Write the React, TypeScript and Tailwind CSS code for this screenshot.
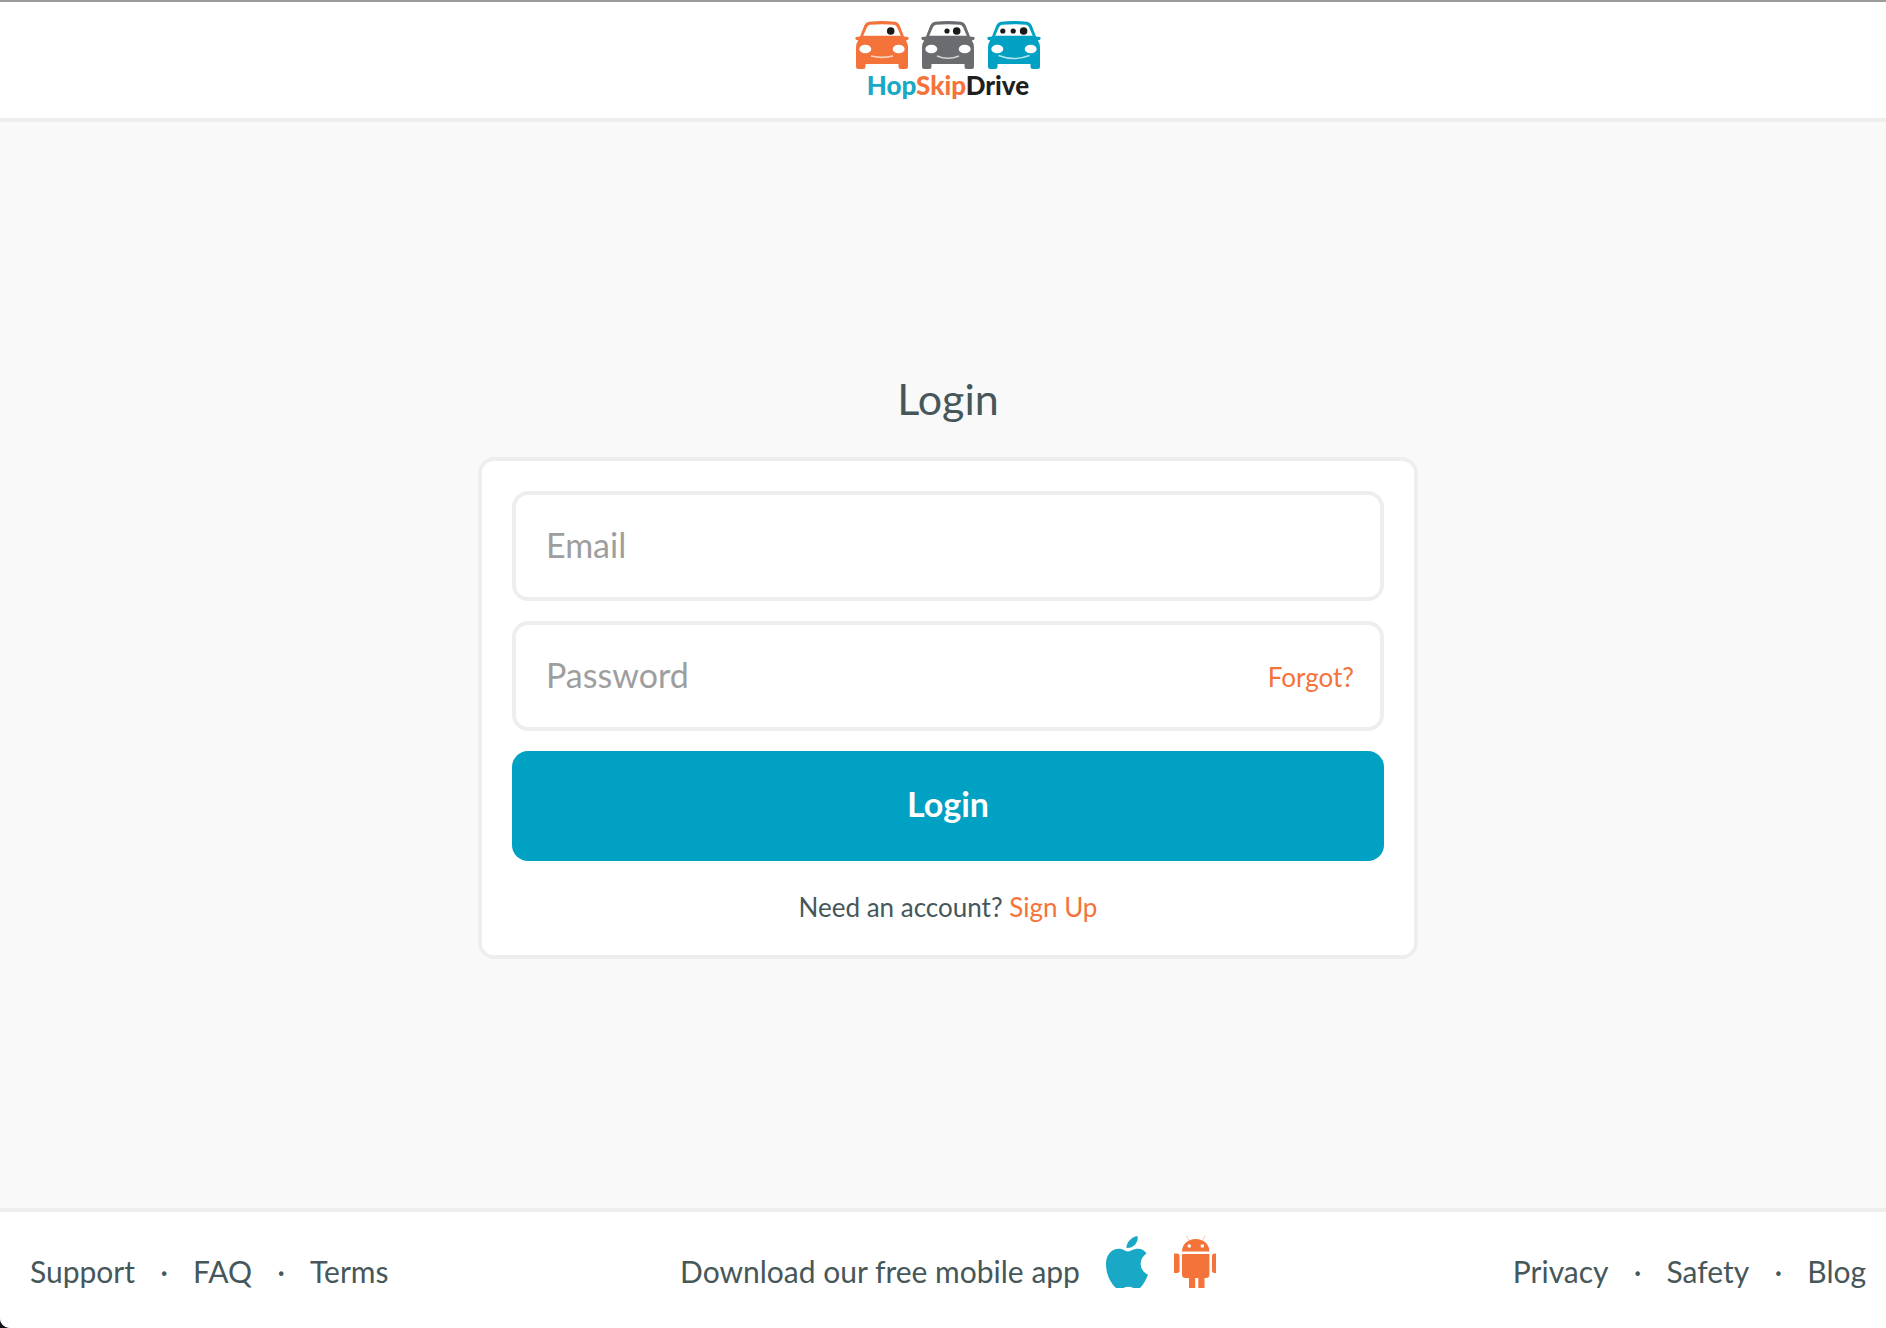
import React from "react";

const passengers = {
  one: [{ cx: 35.7, r: 3.8 }],
  two: [
    { cx: 26, r: 2.6 },
    { cx: 35.7, r: 3.8 },
  ],
  three: [
    { cx: 15.8, r: 2.6 },
    { cx: 26.2, r: 2.6 },
    { cx: 36.6, r: 3.8 },
  ],
};

const smiles = {
  small: "M16 35Q27 37.8 38 35",
  medium: "M16 35Q27 39.5 38 35",
  big: "M11.5 34.5Q27 40.5 42.5 34.5",
};

const Car = ({
  color,
  heads,
  smile,
}: {
  color: string;
  heads: { cx: number; r: number }[];
  smile: string;
}) => (
  <svg viewBox="0 0 54 48" className="h-12 w-[54px]" aria-hidden="true">
    <path
      fill={color}
      d="M14 .8Q27-.8 40 .8Q43 1.2 44.5 4L49 15.5L53 16Q54.3 17 53 18.8L50.8 19.6Q53 22.5 53 26.5V45.5Q53 48 50.5 48H46Q43.5 48 43.5 45.5V43H10.5V45.5Q10.5 48 8 48H3.5Q1 48 1 45.5V26.5Q1 22.5 3.2 19.6L1 18.8Q-.3 17 1 16L5 15.5L9.5 4Q11 1.2 14 .8Z"
    />
    <path
      fill="#fff"
      d="M15 3.8Q27 2.6 39 3.8Q41 4 42 6.2L45.8 14.8H8.2L12 6.2Q13 4 15 3.8Z"
    />
    {heads.map((h) => (
      <circle key={h.cx} cx={h.cx} cy="10" r={h.r} fill="#1a1a1a" />
    ))}
    <ellipse cx="10.3" cy="28" rx="6" ry="4.3" fill="#fff" />
    <ellipse cx="43.7" cy="28" rx="6" ry="4.3" fill="#fff" />
    <path d={smile} fill="none" stroke="#fff" strokeWidth="1.6" strokeOpacity=".7" />
  </svg>
);

const Logo = () => (
  <a href="#" className="flex flex-col items-center">
    <span className="flex gap-3">
      <Car color="#f4733a" heads={passengers.one} smile={smiles.small} />
      <Car color="#6b6c6f" heads={passengers.two} smile={smiles.medium} />
      <Car color="#00a1c3" heads={passengers.three} smile={smiles.big} />
    </span>
    <span className="font-[Lato] text-[26px] leading-8 font-black text-[#1f1f21]">
      <span className="text-[#19a8c6]">Hop</span>
      <span className="text-[#f4733a]">Skip</span>Drive
    </span>
  </a>
);

const AppleIcon = () => (
  <svg viewBox="0 0 42 52" className="h-[52px] w-[42px]" fill="#19a8c6" aria-hidden="true">
    <path d="M31.5 0C33 6 27.5 12.5 20.5 12C20 7 25 1 31.5 0Z" />
    <path d="M22 15.5C25 15.5 27 12.8 32 12.8C36 12.8 38.5 14.5 40.5 17.5C32 23 33 35 42 38.5C40 44 37.5 48.5 34 52H27.5C24 50.4 20.5 50.4 17.5 52H10C3.5 46 0 37 0 28C0 18.5 6 12.8 13 12.8C17 12.8 19 15.5 22 15.5Z" />
  </svg>
);

const AndroidIcon = () => (
  <svg viewBox="0 0 42 52" className="h-[52px] w-[42px]" fill="#f4733a" aria-hidden="true">
    <path d="M8 15.5C8 8 14 3 21.7 3S35.4 8 35.4 15.5Z" />
    <path d="M12.5 0L15.5 5M31 0L28 5" stroke="#f4733a" strokeOpacity=".4" />
    <circle cx="15.3" cy="10" r="1.8" fill="#fff" />
    <circle cx="28.3" cy="10" r="1.8" fill="#fff" />
    <path d="M8 18H35.4V38.5Q35.4 42 32 42H30.5V52H24.3V42H21.2V52H15V42H11.5Q8 42 8 38.5Z" />
    <path d="M0 17.5H3Q5.5 17.5 5.5 20V34.5Q5.5 37 3 37H0Z" />
    <path d="M42 17.5H40.5Q38 17.5 38 20V34.5Q38 37 40.5 37H42Z" />
  </svg>
);

const FooterLinks = ({ links }: { links: string[] }) => (
  <ul className="flex pt-[15px]">
    {links.map((link, i) => (
      <li key={link} className="flex">
        {i > 0 && <span className="w-[58px] text-center">·</span>}
        <a href="#">{link}</a>
      </li>
    ))}
  </ul>
);

const App = () => {
  return (
    <div className="bg-[#14141c]">
      <div className="flex min-h-screen flex-col overflow-hidden rounded-bl-[10px] border-t-2 border-[#9b9b9b] bg-[#f9f9f9] font-[Lato,sans-serif] text-[#46575a]">
        <header className="flex h-30 justify-center border-b-4 border-[#eee] bg-white pt-[19px] pl-2.5">
          <Logo />
        </header>

        <main className="flex flex-1 flex-col items-center justify-center pt-1 pl-2.5">
          <h1 className="mb-[34px] text-[43px] leading-12">Login</h1>
          <form
            className="w-full max-w-[940px] rounded-2xl border-4 border-[#eee] bg-white p-[30px]"
            onSubmit={(e) => e.preventDefault()}
          >
            <input
              type="email"
              aria-label="Email"
              placeholder="Email"
              className="mb-5 block h-[110px] w-full rounded-2xl border-4 border-[#eee] px-[30px] pb-1 text-[34px] placeholder:text-[#9e9e9e]"
            />
            <div className="relative mb-5">
              <input
                type="password"
                aria-label="Password"
                placeholder="Password"
                className="block h-[110px] w-full rounded-2xl border-4 border-[#eee] px-[30px] pb-1 text-[34px] placeholder:text-[#9e9e9e]"
              />
              <a href="#" className="absolute top-10 right-[30px] text-[26px] leading-8 text-[#f4733a]">
                Forgot?
              </a>
            </div>
            <button
              type="submit"
              className="mb-7 block h-[110px] w-full rounded-2xl bg-[#00a1c3] pb-1.5 text-[34px] font-bold text-white"
            >
              Login
            </button>
            <p className="text-center text-[26px] leading-9">
              Need an account?{" "}
              <a href="#" className="text-[#f4733a]">
                Sign Up
              </a>
            </p>
          </form>
        </main>

        <footer className="grid h-30 grid-cols-[1fr_auto_1fr] items-start border-t-4 border-[#eee] bg-white pt-6 pr-5 pl-[30px] text-[30px] leading-10">
          <FooterLinks links={["Support", "FAQ", "Terms"]} />
          <div className="flex gap-[26px]">
            <span className="pt-[15px]">Download our free mobile app</span>
            <a href="#" aria-label="App Store">
              <AppleIcon />
            </a>
            <a href="#" aria-label="Google Play">
              <AndroidIcon />
            </a>
          </div>
          <div className="justify-self-end">
            <FooterLinks links={["Privacy", "Safety", "Blog"]} />
          </div>
        </footer>
      </div>
    </div>
  );
};

export default App;
